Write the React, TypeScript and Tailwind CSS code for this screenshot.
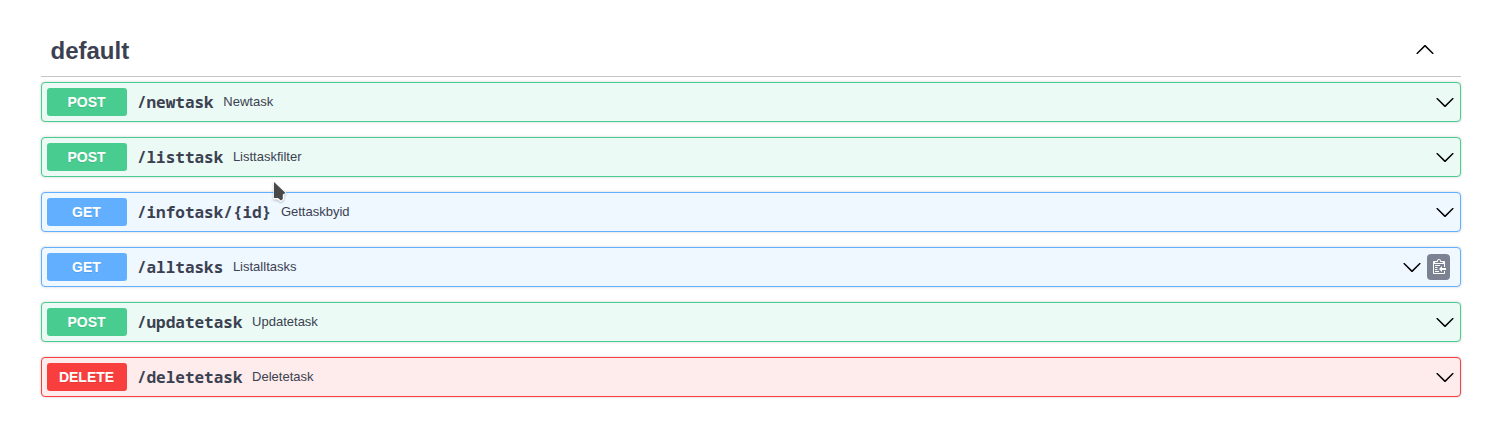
const Arrow = ({ up = false }: { up?: boolean }) => (
  <svg width="20" height="20" viewBox="0 0 20 20" className={up ? "mb-1 shrink-0" : "shrink-0"}>
    {up ? (
      <path d="M 17.418 14.908 C 17.69 15.176 18.127 15.176 18.397 14.908 C 18.667 14.64 18.668 14.207 18.397 13.939 L 10.489 6.109 C 10.219 5.841 9.782 5.841 9.51 6.109 L 1.602 13.939 C 1.332 14.207 1.332 14.64 1.602 14.908 C 1.873 15.176 2.311 15.176 2.581 14.908 L 10 7.767 L 17.418 14.908 Z" />
    ) : (
      <path d="M17.418 6.109c.272-.268.709-.268.979 0s.271.701 0 .969l-7.908 7.83c-.27.268-.707.268-.979 0l-7.908-7.83c-.27-.268-.27-.701 0-.969.271-.268.709-.268.979 0L10 13.25l7.418-7.141z" />
    )}
  </svg>
);

const Copy = () => (
  <svg width="15" height="16" viewBox="0 0 15 16">
    <g transform="translate(2, -1)">
      <path fill="#ffffff" fillRule="evenodd" d="M2 13h4v1H2v-1zm5-6H2v1h5V7zm2 3V8l-3 3 3 3v-2h5v-2H9zM4.5 9H2v1h2.5V9zM2 12h2.5v-1H2v1zm9 1h1v2c-.02.28-.11.52-.3.7-.19.18-.42.28-.7.3H1c-.55 0-1-.45-1-1V4c0-.55.45-1 1-1h3c0-1.11.89-2 2-2 1.11 0 2 .89 2 2h3c.55 0 1 .45 1 1v5h-1V6H1v9h10v-2zM2 5h8c0-.55-.45-1-1-1H8c-.55 0-1-.45-1-1s-.45-1-1-1-1 .45-1 1-.45 1-1 1H3c-.55 0-1 .45-1 1z" />
    </g>
  </svg>
);

const styles = {
  POST: { row: "border-[#49cc90] bg-[#ebfaf4]", badge: "bg-[#49cc90]" },
  GET: { row: "border-[#61affe] bg-[#eff7ff]", badge: "bg-[#61affe]" },
  DELETE: { row: "border-[#f93e3e] bg-[#feebeb]", badge: "bg-[#f93e3e]" },
};

const operations: { method: keyof typeof styles; path: string; summary: string; copy?: boolean }[] = [
  { method: "POST", path: "/newtask", summary: "Newtask" },
  { method: "POST", path: "/listtask", summary: "Listtaskfilter" },
  { method: "GET", path: "/infotask/{id}", summary: "Gettaskbyid" },
  { method: "GET", path: "/alltasks", summary: "Listalltasks", copy: true },
  { method: "POST", path: "/updatetask", summary: "Updatetask" },
  { method: "DELETE", path: "/deletetask", summary: "Deletetask" },
];

export default function App() {
  return (
    <main className="relative h-[429px] overflow-hidden bg-white pt-[25px] pr-[30.5px] pl-[40.5px] font-['Liberation_Sans',sans-serif] text-[#3b4151]">
      <header className="mb-[5px] flex h-[52px] items-center justify-between border-b border-[#3b4151]/30 pr-[26px] pl-[10px]">
        <h2 className="text-[24px] leading-none font-bold">default</h2>
        <Arrow up />
      </header>
      <div className="flex flex-col gap-[15px]">
        {operations.map((op) => (
          <section
            key={op.path}
            className={`flex h-10 items-center rounded-[4px] border pr-[5px] pl-[5px] shadow-[0_0_3px_rgba(0,0,0,0.19)] ${styles[op.method].row}`}
          >
            <span
              className={`flex h-7 w-20 shrink-0 items-center justify-center rounded-[3px] text-[14px] leading-none font-bold text-white [text-shadow:0_1px_0_rgba(0,0,0,0.1)] ${styles[op.method].badge}`}
            >
              {op.method}
            </span>
            <span className="pl-[10.4px] font-['Noto_Sans_Mono','DejaVu_Sans_Mono',monospace] text-[16px] font-bold">{op.path}</span>
            <span className="grow pl-[9.6px] text-[13px]">{op.summary}</span>
            <Arrow />
            {op.copy && (
              <button className="mr-[5px] ml-[5px] flex h-[26px] w-[23px] items-center justify-center rounded-[4px] bg-[#7d8293]">
                <Copy />
              </button>
            )}
          </section>
        ))}
      </div>
      <svg className="absolute top-[181px] left-[273px] drop-shadow-[0_1px_1px_rgba(0,0,0,0.25)]" width="15" height="22" viewBox="0 0 15 22">
        <path d="M0.500 0V18.500H4.500L8 21L11 18.500V14L13.500 12Z" fill="#fff" />
        <path d="M1 1V17H5L8 19.500L9.800 18V13.500L12.500 12Z" fill="#484848" />
      </svg>
    </main>
  );
}
